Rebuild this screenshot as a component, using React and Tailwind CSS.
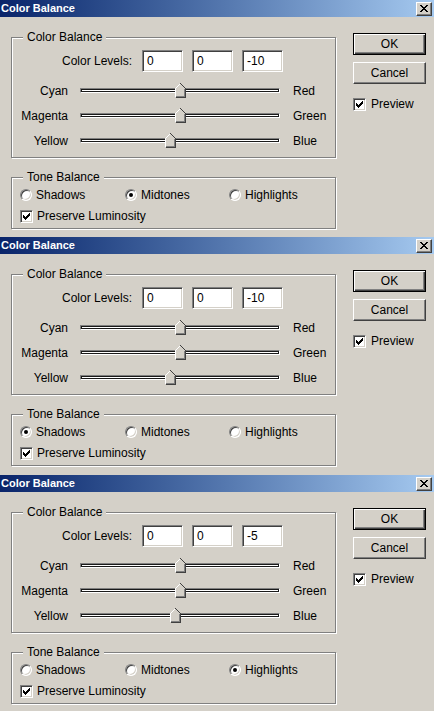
import React from 'react';

const FONT = { fontFamily: '"Liberation Sans", Arial, sans-serif' };

const dialogs = [
  { levels: [0, 0, -10], tone: 'Midtones', height: 237 },
  { levels: [0, 0, -10], tone: 'Shadows', height: 238 },
  { levels: [0, 0, -5], tone: 'Highlights', height: 236 },
];

const sliders = [
  ['Cyan', 'Red'],
  ['Magenta', 'Green'],
  ['Yellow', 'Blue'],
];

function CloseButton() {
  return (
    <div className="flex h-[14px] w-[16px] items-center justify-center border border-t-white border-l-white border-r-[#404040] border-b-[#404040] bg-[#D4D0C8] shadow-[inset_-1px_-1px_0_#808080]">
      <svg width="8" height="7" viewBox="0 0 8 7" shapeRendering="crispEdges">
        <path d="M0 0h2l2 2.5L6 0h2L5 3.5 8 7H6L4 4.5 2 7H0l3-3.5z" fill="#000" />
      </svg>
    </div>
  );
}

function TitleBar() {
  return (
    <div className="flex h-[17px] items-center justify-between bg-gradient-to-r from-[#0A246A] to-[#A6CAF0] pl-[1px] pr-[2px]">
      <span className="text-[11px] font-bold leading-none text-white">Color Balance</span>
      <CloseButton />
    </div>
  );
}

function Group({ title, className, children }) {
  return (
    <div
      className={`relative border border-[#808080] shadow-[1px_1px_0_#fff,inset_1px_1px_0_#fff] ${className}`}
    >
      <span className="absolute -top-[8px] left-[11px] bg-[#D4D0C8] px-[4px] text-[12px] leading-[14px]">
        {title}
      </span>
      {children}
    </div>
  );
}

function LevelInput({ value }) {
  return (
    <div className="flex h-[22px] w-[41px] items-center border border-t-[#808080] border-l-[#808080] border-b-white border-r-white bg-white pl-[4px] text-[12px] shadow-[inset_1px_1px_0_#404040,inset_-1px_-1px_0_#D4D0C8]">
      {value}
    </div>
  );
}

function Thumb() {
  return (
    <svg width="11" height="15" viewBox="0 0 11 15" shapeRendering="crispEdges">
      <polygon points="0.5,5.5 5.5,0.5 10.5,5.5 10.5,14.5 0.5,14.5" fill="#D4D0C8" />
      <polyline points="0.5,14 0.5,5.5 5.5,0.5" stroke="#fff" fill="none" />
      <polyline points="5.5,0.5 10.5,5.5 10.5,14.5 0.5,14.5" stroke="#404040" fill="none" />
      <polyline points="9.5,6 9.5,13.5 1,13.5" stroke="#808080" fill="none" />
    </svg>
  );
}

function SliderRow({ left, right, value }) {
  return (
    <div className="flex h-[25px] items-center">
      <span className="w-[56px] text-right">{left}</span>
      <div className="relative ml-[12px] h-[5px] w-[200px] border border-t-[#808080] border-l-[#808080] border-b-white border-r-white bg-white shadow-[inset_0_0_0_1px_#1a1a1a]">
        <div className="absolute top-[-6px]" style={{ left: 100 + value - 6 }}>
          <Thumb />
        </div>
      </div>
      <span className="ml-[13px]">{right}</span>
    </div>
  );
}

function Checkbox() {
  return (
    <div className="flex h-[13px] w-[13px] items-center justify-center border border-t-[#808080] border-l-[#808080] border-b-white border-r-white bg-white shadow-[inset_1px_1px_0_#404040,inset_-1px_-1px_0_#D4D0C8]">
      <svg width="7" height="7" viewBox="0 0 7 7" shapeRendering="crispEdges">
        <path d="M0 2h1v1h1v1h1V3h1V2h1V1h1V0h1v3H6v1H5v1H4v1H3v1H2V6H1V5H0z" fill="#000" />
      </svg>
    </div>
  );
}

function Radio({ checked }) {
  return (
    <div className="flex h-[12px] w-[12px] items-center justify-center rounded-full border border-t-[#808080] border-l-[#808080] border-b-white border-r-white bg-white shadow-[inset_1px_1px_0_#404040,inset_-1px_-1px_0_#D4D0C8]">
      {checked && <div className="h-[4px] w-[4px] rounded-full bg-black" />}
    </div>
  );
}

function Button({ label, isDefault }) {
  return (
    <div
      className={`flex h-[22px] w-[73px] items-center justify-center border text-[12px] ${
        isDefault
          ? 'border-black shadow-[inset_1px_1px_0_#fff,inset_-1px_-1px_0_#404040,inset_-2px_-2px_0_#808080]'
          : 'border-t-white border-l-white border-r-[#404040] border-b-[#404040] shadow-[inset_-1px_-1px_0_#808080]'
      }`}
    >
      {label}
    </div>
  );
}

function Dialog({ levels, tone, height }) {
  return (
    <div className="flex flex-col bg-[#D4D0C8] text-[12px] text-black" style={{ height }}>
      <TitleBar />
      <div className="flex">
        <div className="ml-[11px] w-[325px]">
          <Group title="Color Balance" className="mt-[20px] h-[121px] pt-[11px]">
            <div className="flex h-[24px] items-center">
              <span className="w-[120px] text-right">Color Levels:</span>
              <div className="ml-[10px] flex gap-[9px]">
                {levels.map((v, i) => (
                  <LevelInput key={i} value={v} />
                ))}
              </div>
            </div>
            <div className="mt-[5px]">
              {sliders.map(([l, r], i) => (
                <SliderRow key={l} left={l} right={r} value={levels[i]} />
              ))}
            </div>
          </Group>
          <Group title="Tone Balance" className="mt-[19px] h-[52px] pl-[8px] pt-[9px]">
            <div className="flex h-[16px] items-center">
              {['Shadows', 'Midtones', 'Highlights'].map((t, i) => (
                <div
                  key={t}
                  className={`flex items-center gap-[4px] ${i === 0 ? 'w-[105px]' : i === 1 ? 'w-[104px]' : ''}`}
                >
                  <Radio checked={tone === t} />
                  <span>{t}</span>
                </div>
              ))}
            </div>
            <div className="mt-[5px] flex h-[16px] items-center gap-[4px]">
              <Checkbox />
              <span>Preserve Luminosity</span>
            </div>
          </Group>
        </div>
        <div className="ml-[17px] flex flex-col pt-[16px]">
          <Button label="OK" isDefault />
          <div className="mt-[7px]">
            <Button label="Cancel" />
          </div>
          <div className="mt-[11px] flex items-center gap-[5px]">
            <Checkbox />
            <span>Preview</span>
          </div>
        </div>
      </div>
    </div>
  );
}

export default function App() {
  return (
    <div className="w-[434px] overflow-hidden" style={FONT}>
      {dialogs.map((d, i) => (
        <Dialog key={i} {...d} />
      ))}
    </div>
  );
}
